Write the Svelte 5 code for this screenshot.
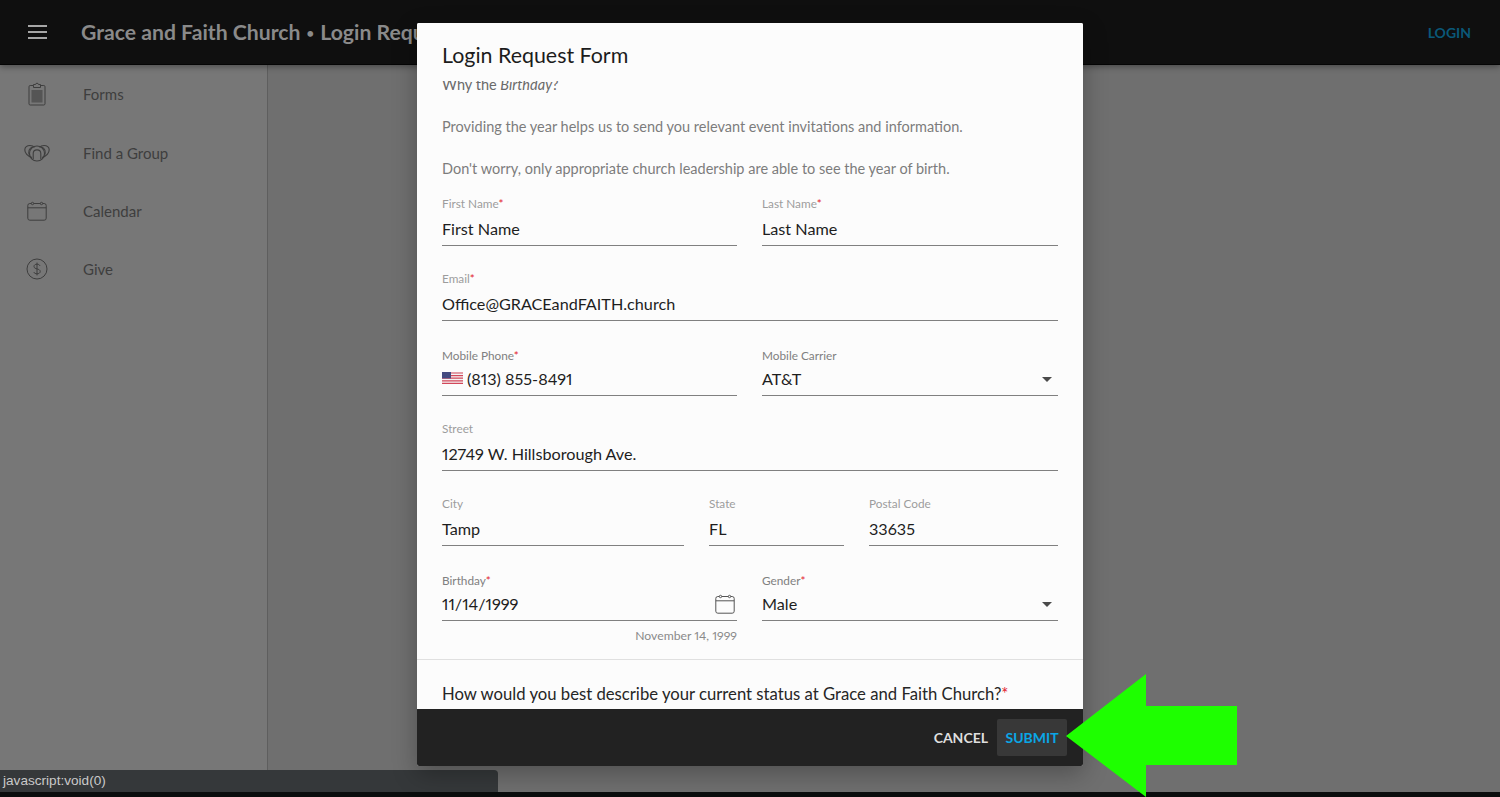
<script>
    // Sidebar links
    let links = ["Forms", "Find a Group", "Calendar", "Give"];
</script>

<style>
    :global(body) {
        margin: 0;
        background: #0b0d0d;
    }
    .page {
        position: relative;
        width: 1500px;
        height: 797px;
        overflow: hidden;
        font-family: Lato, "Liberation Sans", sans-serif;
        font-variant-numeric: proportional-nums;
        display: flex;
        flex-direction: column;
    }
    .topbar {
        height: 64px;
        flex: none;
        background: #0f0f0f;
        display: flex;
        align-items: center;
        padding: 0 29px 0 28px;
        border-bottom: 1px solid #050505;
        box-shadow: 0 2px 6px rgba(0, 0, 0, 0.35);
        position: relative;
        z-index: 1;
    }
    .burger {
        width: 19px;
        height: 14px;
        display: flex;
        flex-direction: column;
        justify-content: space-between;
        margin-right: 34px;
    }
    .burger span {
        height: 2px;
        background: #a6a6a6;
    }
    .title {
        font-size: 21.2px;
        font-weight: 700;
        color: #8a8a8a;
        white-space: nowrap;
        flex: 1;
    }
    .dot {
        font-size: 13px;
        vertical-align: 2px;
        padding: 0 1px;
    }
    .login {
        font-size: 14px;
        font-weight: 700;
        color: #0a5878;
    }
    .main {
        flex: 1;
        display: flex;
        min-height: 0;
    }
    .sidebar {
        width: 267px;
        flex: none;
        background: #777777;
        border-right: 1px solid #5e5e5e;
    }
    .link {
        height: 58.4px;
        display: flex;
        align-items: center;
        font-size: 15px;
        color: #3e3e3e;
    }
    .icon {
        width: 83px;
        flex: none;
        display: flex;
        justify-content: center;
        padding-right: 9px;
        box-sizing: border-box;
    }
    .content {
        flex: 1;
        background: #6f6f6f;
    }
    .bottom {
        height: 5px;
        flex: none;
        background: #0b0d0d;
    }
    .status {
        position: absolute;
        left: 0;
        bottom: 5px;
        width: 498px;
        height: 22px;
        box-sizing: border-box;
        background: #35383a;
        border-top-right-radius: 4px;
        color: #c9c9c9;
        font-family: "Liberation Sans", Arial, sans-serif;
        font-size: 13.6px;
        line-height: 22px;
        padding-left: 3px;
    }
    .modal {
        position: absolute;
        left: 417px;
        top: 23px;
        width: 666px;
        height: 743px;
        background: #fcfcfc;
        border-radius: 2px;
        box-shadow: 0 8px 24px rgba(0, 0, 0, 0.28);
        display: flex;
        flex-direction: column;
        overflow: hidden;
        z-index: 2;
    }
    .modal h2 {
        margin: 0;
        height: 58px;
        flex: none;
        box-sizing: border-box;
        padding: 20px 25px 0;
        font-size: 21.4px;
        font-weight: 400;
        line-height: 24px;
        color: #1c1c1c;
        background: #fcfcfc;
    }
    .body {
        flex: 1;
        min-height: 0;
        overflow: hidden;
    }
    .scroll {
        margin-top: -6px;
        padding: 0 25px;
    }
    .why {
        margin: 0 0 22px;
        height: 20px;
        font-size: 14.5px;
        line-height: 20px;
        color: #6a6a6a;
    }
    .note {
        margin: 0 0 22px;
        font-size: 14.5px;
        line-height: 20px;
        color: #7c7c7c;
    }
    .note.last {
        margin-bottom: 11px;
    }
    .row {
        display: grid;
        grid-template-columns: 295px 296px;
        column-gap: 25px;
    }
    .row.three {
        grid-template-columns: 242px 135px 189px;
    }
    .field {
        height: 75px;
        box-sizing: border-box;
        padding-top: 6px;
    }
    .field label {
        display: block;
        height: 16px;
        font-size: 11.8px;
        line-height: 16px;
        color: #9c9c9c;
    }
    .field label.dark {
        color: #808080;
        padding-top: 1.5px;
        height: 14.5px;
    }
    .req {
        color: #e2202c;
    }
    .value {
        height: 34px;
        box-sizing: border-box;
        padding-bottom: 1px;
        border-bottom: 1px solid #808080;
        font-size: 16.2px;
        line-height: 21px;
        color: #1e1e1e;
        display: flex;
        align-items: center;
        justify-content: space-between;
    }
    .phone {
        display: flex;
        align-items: center;
        gap: 4px;
    }
    .caret {
        width: 0;
        height: 0;
        border-left: 5.5px solid transparent;
        border-right: 5.5px solid transparent;
        border-top: 5.5px solid #4a4a4a;
        margin-right: 6px;
        margin-top: 3px;
    }
    .hint {
        width: 295px;
        margin-top: -14px;
        height: 28px;
        text-align: right;
        font-size: 12.2px;
        line-height: 16px;
        color: #8a8a8a;
        padding-top: 2px;
    }
    .divider {
        height: 1px;
        background: #e0e0e0;
        margin: 3px -25px 24px;
    }
    .question {
        margin: 0;
        font-size: 16.7px;
        line-height: 20px;
        color: #262626;
        white-space: nowrap;
    }
    .footer {
        height: 57px;
        flex: none;
        background: #222222;
        display: flex;
        align-items: center;
        justify-content: flex-end;
        padding: 0 16px 0 0;
        font-size: 14px;
        font-weight: 700;
    }
    .cancel {
        color: #dedede;
        padding: 0 9px;
    }
    .submit {
        color: #0aa6e6;
        background: #383838;
        border-radius: 2px;
        width: 70px;
        height: 37px;
        display: flex;
        align-items: center;
        justify-content: center;
    }
    .arrow {
        position: absolute;
        left: 1066px;
        top: 674px;
        z-index: 3;
    }
    .cal {
        margin-right: 2px;
        margin-top: 2px;
    }
</style>

<div class="page">
    <div class="topbar">
        <div class="burger"><span></span><span></span><span></span></div>
        <div class="title">Grace and Faith Church <span class="dot">•</span> Login Request Form</div>
        <div class="login">LOGIN</div>
    </div>

    <div class="main">
        <div class="sidebar">
            {#each links as link, i}
                <div class="link">
                    <div class="icon">
                        {#if i === 0}
                            <svg width="20" height="24" viewBox="0 0 20 24" fill="none" stroke="#3e3e3e" stroke-width="1">
                                <rect x="2" y="3.5" width="16" height="19.5" rx="1.2" />
                                <path d="M6.5 3.5 V2.5 H8.5 C8.5 0.8 11.5 0.8 11.5 2.5 H13.5 V5.5 H6.5 Z" fill="#777" />
                                <path d="M4.5 8 H15.5 V20.5 H4.5 Z" fill="#555" stroke="none" />
                            </svg>
                        {:else if i === 1}
                            <svg width="26" height="18" viewBox="0 0 26 18" fill="none" stroke="#3e3e3e" stroke-width="1.1">
                                <path d="M8 13.5 C3.5 12.5 0.8 9 0.8 5.8 C0.8 3 3 1.5 6 1.5 C8 1.5 9.5 2.2 10.5 3.4" />
                                <path d="M18 13.5 C22.5 12.5 25.2 9 25.2 5.8 C25.2 3 23 1.5 20 1.5 C18 1.5 16.5 2.2 15.5 3.4" />
                                <circle cx="13" cy="9.5" r="7.5" />
                                <path d="M9.2 15 V9.5 C9.2 4.6 16.8 4.6 16.8 9.5 V15" />
                                <path d="M5.6 11.5 C3.8 7.8 5 3.8 8.8 3" />
                                <path d="M20.4 11.5 C22.2 7.8 21 3.8 17.2 3" />
                            </svg>
                        {:else if i === 2}
                            <svg width="20" height="20" viewBox="0 0 20 20" fill="none" stroke="#3e3e3e" stroke-width="1">
                                <rect x="0.8" y="2.5" width="18.4" height="16.7" rx="2" />
                                <path d="M0.8 6.8 H19.2" />
                                <circle cx="5.5" cy="2.5" r="1.2" fill="#777" />
                                <circle cx="14.5" cy="2.5" r="1.2" fill="#777" />
                            </svg>
                        {:else}
                            <svg width="22" height="22" viewBox="0 0 22 22" fill="none" stroke="#3e3e3e" stroke-width="1">
                                <circle cx="11" cy="11" r="10" />
                                <path d="M14 7.8 C13.4 6.6 12.2 6.2 11 6.2 C9.2 6.2 8 7.1 8 8.5 C8 11.6 14.2 10.2 14.2 13.5 C14.2 15 12.8 15.8 11 15.8 C9.5 15.8 8.3 15.2 7.7 14 M11 4.6 V17.4" />
                            </svg>
                        {/if}
                    </div>
                    {link}
                </div>
            {/each}
        </div>
        <div class="content"></div>
    </div>
    <div class="bottom"></div>

    <div class="status">javascript:void(0)</div>

    <!-- Login form dialog -->
    <div class="modal">
        <h2>Login Request Form</h2>
        <div class="body">
            <div class="scroll">
                <p class="why">Why the <em>Birthday</em>?</p>
                <p class="note">Providing the year helps us to send you relevant event invitations and information.</p>
                <p class="note last">Don't worry, only appropriate church leadership are able to see the year of birth.</p>

                <div class="row">
                    <div class="field">
                        <label>First Name<span class="req">*</span></label>
                        <div class="value">First Name</div>
                    </div>
                    <div class="field">
                        <label>Last Name<span class="req">*</span></label>
                        <div class="value">Last Name</div>
                    </div>
                </div>
                <div class="field">
                    <label>Email<span class="req">*</span></label>
                    <div class="value">Office@GRACEandFAITH.church</div>
                </div>
                <div class="row">
                    <div class="field">
                        <label class="dark">Mobile Phone<span class="req">*</span></label>
                        <div class="value">
                            <span class="phone">
                                <svg width="21" height="12" viewBox="0 0 21 12">
                                    <rect width="21" height="12" fill="#f4f4f4" />
                                    <path d="M0 1 H21 M0 3.6 H21 M0 6.2 H21 M0 8.8 H21 M0 11.4 H21" stroke="#d2475a" stroke-width="1.2" />
                                    <rect width="9" height="6.4" fill="#444a80" />
                                </svg>
                                (813) 855-8491
                            </span>
                        </div>
                    </div>
                    <div class="field">
                        <label class="dark">Mobile Carrier</label>
                        <div class="value">AT&amp;T<span class="caret"></span></div>
                    </div>
                </div>
                <div class="field">
                    <label>Street</label>
                    <div class="value">12749 W. Hillsborough Ave.</div>
                </div>
                <div class="row three">
                    <div class="field">
                        <label>City</label>
                        <div class="value">Tamp</div>
                    </div>
                    <div class="field">
                        <label>State</label>
                        <div class="value">FL</div>
                    </div>
                    <div class="field">
                        <label>Postal Code</label>
                        <div class="value">33635</div>
                    </div>
                </div>
                <div class="row">
                    <div class="field">
                        <label class="dark">Birthday<span class="req">*</span></label>
                        <div class="value">
                            11/14/1999
                            <svg class="cal" width="20" height="20" viewBox="0 0 20 20" fill="none" stroke="#555" stroke-width="1">
                                <rect x="0.8" y="2.5" width="18.4" height="16.7" rx="2" />
                                <path d="M0.8 6.8 H19.2" />
                                <circle cx="5.5" cy="2.5" r="1.2" fill="#fcfcfc" />
                                <circle cx="14.5" cy="2.5" r="1.2" fill="#fcfcfc" />
                            </svg>
                        </div>
                    </div>
                    <div class="field">
                        <label class="dark">Gender<span class="req">*</span></label>
                        <div class="value">Male<span class="caret"></span></div>
                    </div>
                </div>
                <div class="hint">November 14, 1999</div>
                <div class="divider"></div>
                <p class="question">How would you best describe your current status at Grace and Faith Church?<span class="req">*</span></p>
            </div>
        </div>
        <div class="footer">
            <div class="cancel">CANCEL</div>
            <div class="submit">SUBMIT</div>
        </div>
    </div>

    <!-- Green pointer over the submit button -->
    <svg class="arrow" width="171" height="123" viewBox="0 0 171 123">
        <polygon points="0,62 80,0 80,32 171,32 171,91 80,91 80,123" fill="#1eff00" />
    </svg>
</div>
